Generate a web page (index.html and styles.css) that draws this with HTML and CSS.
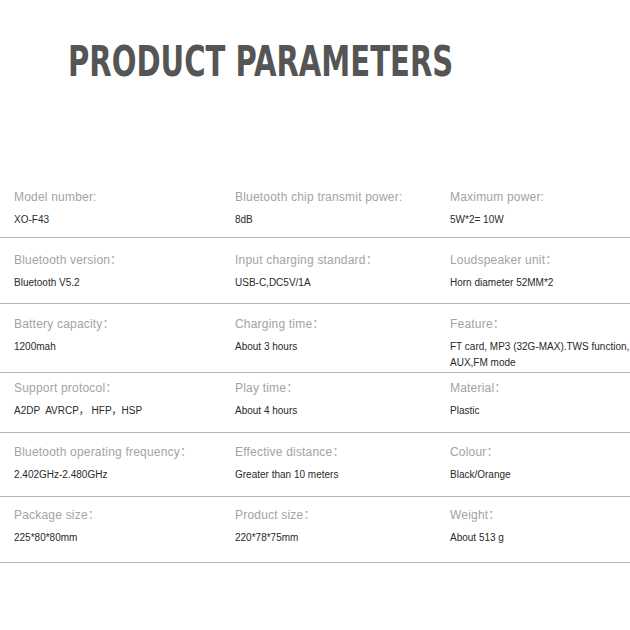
FILE: index.html
```html
<!DOCTYPE html>
<html lang="en">
<head>
<meta charset="utf-8">
<title>Product Parameters</title>
<link rel="stylesheet" href="styles.css">
</head>
<body>
<header class="header">
  <h1 class="title">PRODUCT PARAMETERS</h1>
</header>
<section class="params">
  <div class="row row-1">
    <div class="cell"><div class="label">Model number:</div><div class="value">XO-F43</div></div>
    <div class="cell"><div class="label">Bluetooth chip transmit power:</div><div class="value">8dB</div></div>
    <div class="cell"><div class="label">Maximum power:</div><div class="value">5W*2= 10W</div></div>
  </div>
  <div class="row row-2">
    <div class="cell"><div class="label">Bluetooth version：</div><div class="value">Bluetooth V5.2</div></div>
    <div class="cell"><div class="label">Input charging standard：</div><div class="value">USB-C,DC5V/1A</div></div>
    <div class="cell"><div class="label">Loudspeaker unit：</div><div class="value">Horn diameter 52MM*2</div></div>
  </div>
  <div class="row row-3">
    <div class="cell"><div class="label">Battery capacity：</div><div class="value">1200mah</div></div>
    <div class="cell"><div class="label">Charging time：</div><div class="value">About 3 hours</div></div>
    <div class="cell"><div class="label">Feature：</div><div class="value value-nowrap">FT card, MP3 (32G-MAX).TWS function,<br>AUX,FM mode</div></div>
  </div>
  <div class="row row-4">
    <div class="cell"><div class="label">Support protocol：</div><div class="value">A2DP&nbsp; AVRCP，&nbsp;HFP，HSP</div></div>
    <div class="cell"><div class="label">Play time：</div><div class="value">About 4 hours</div></div>
    <div class="cell"><div class="label">Material：</div><div class="value">Plastic</div></div>
  </div>
  <div class="row row-5">
    <div class="cell"><div class="label">Bluetooth operating frequency：</div><div class="value">2.402GHz-2.480GHz</div></div>
    <div class="cell"><div class="label">Effective distance：</div><div class="value">Greater than 10 meters</div></div>
    <div class="cell"><div class="label">Colour：</div><div class="value">Black/Orange</div></div>
  </div>
  <div class="row row-6">
    <div class="cell"><div class="label">Package size：</div><div class="value">225*80*80mm</div></div>
    <div class="cell"><div class="label">Product size：</div><div class="value">220*78*75mm</div></div>
    <div class="cell"><div class="label">Weight：</div><div class="value">About 513 g</div></div>
  </div>
</section>
</body>
</html>
```

FILE: styles.css
```css
html, body {
  margin: 0;
  padding: 0;
  background: #ffffff;
}

body {
  width: 630px;
  font-family: "Liberation Sans", Arial, "Noto Sans CJK SC", sans-serif;
}

.header {
  height: 178px;
  padding-left: 68px;
  box-sizing: border-box;
  padding-top: 37px;
}

.title {
  margin: 0;
  display: inline-block;
  font-family: "DejaVu Sans Condensed", "DejaVu Sans", sans-serif;
  font-stretch: condensed;
  font-weight: bold;
  font-size: 42px;
  line-height: 50px;
  color: #555555;
  transform: scaleX(0.77);
  transform-origin: left center;
  white-space: nowrap;
}

.params {
  display: flex;
  flex-direction: column;
}

.row {
  display: grid;
  grid-template-columns: 221px 215px 1fr;
  padding-left: 14px;
  box-sizing: border-box;
  border-bottom: 1px solid #b4b4b4;
  padding-top: 12px;
}

.row-1 { height: 60px; }
.row-2 { height: 66px; padding-top: 15px; }
.row-3 { height: 69px; padding-top: 13px; }
.row-4 { height: 60px; padding-top: 8px; }
.row-5 { height: 64px; padding-top: 12px; }
.row-6 { height: 66px; padding-top: 11px; }

.label {
  font-size: 12px;
  line-height: 14px;
  color: #a3a3a3;
  letter-spacing: 0.2px;
}

.value {
  margin-top: 8px;
  font-size: 10px;
  line-height: 16px;
  color: #2a2a2a;
}

.value-nowrap {
  white-space: nowrap;
}
```
